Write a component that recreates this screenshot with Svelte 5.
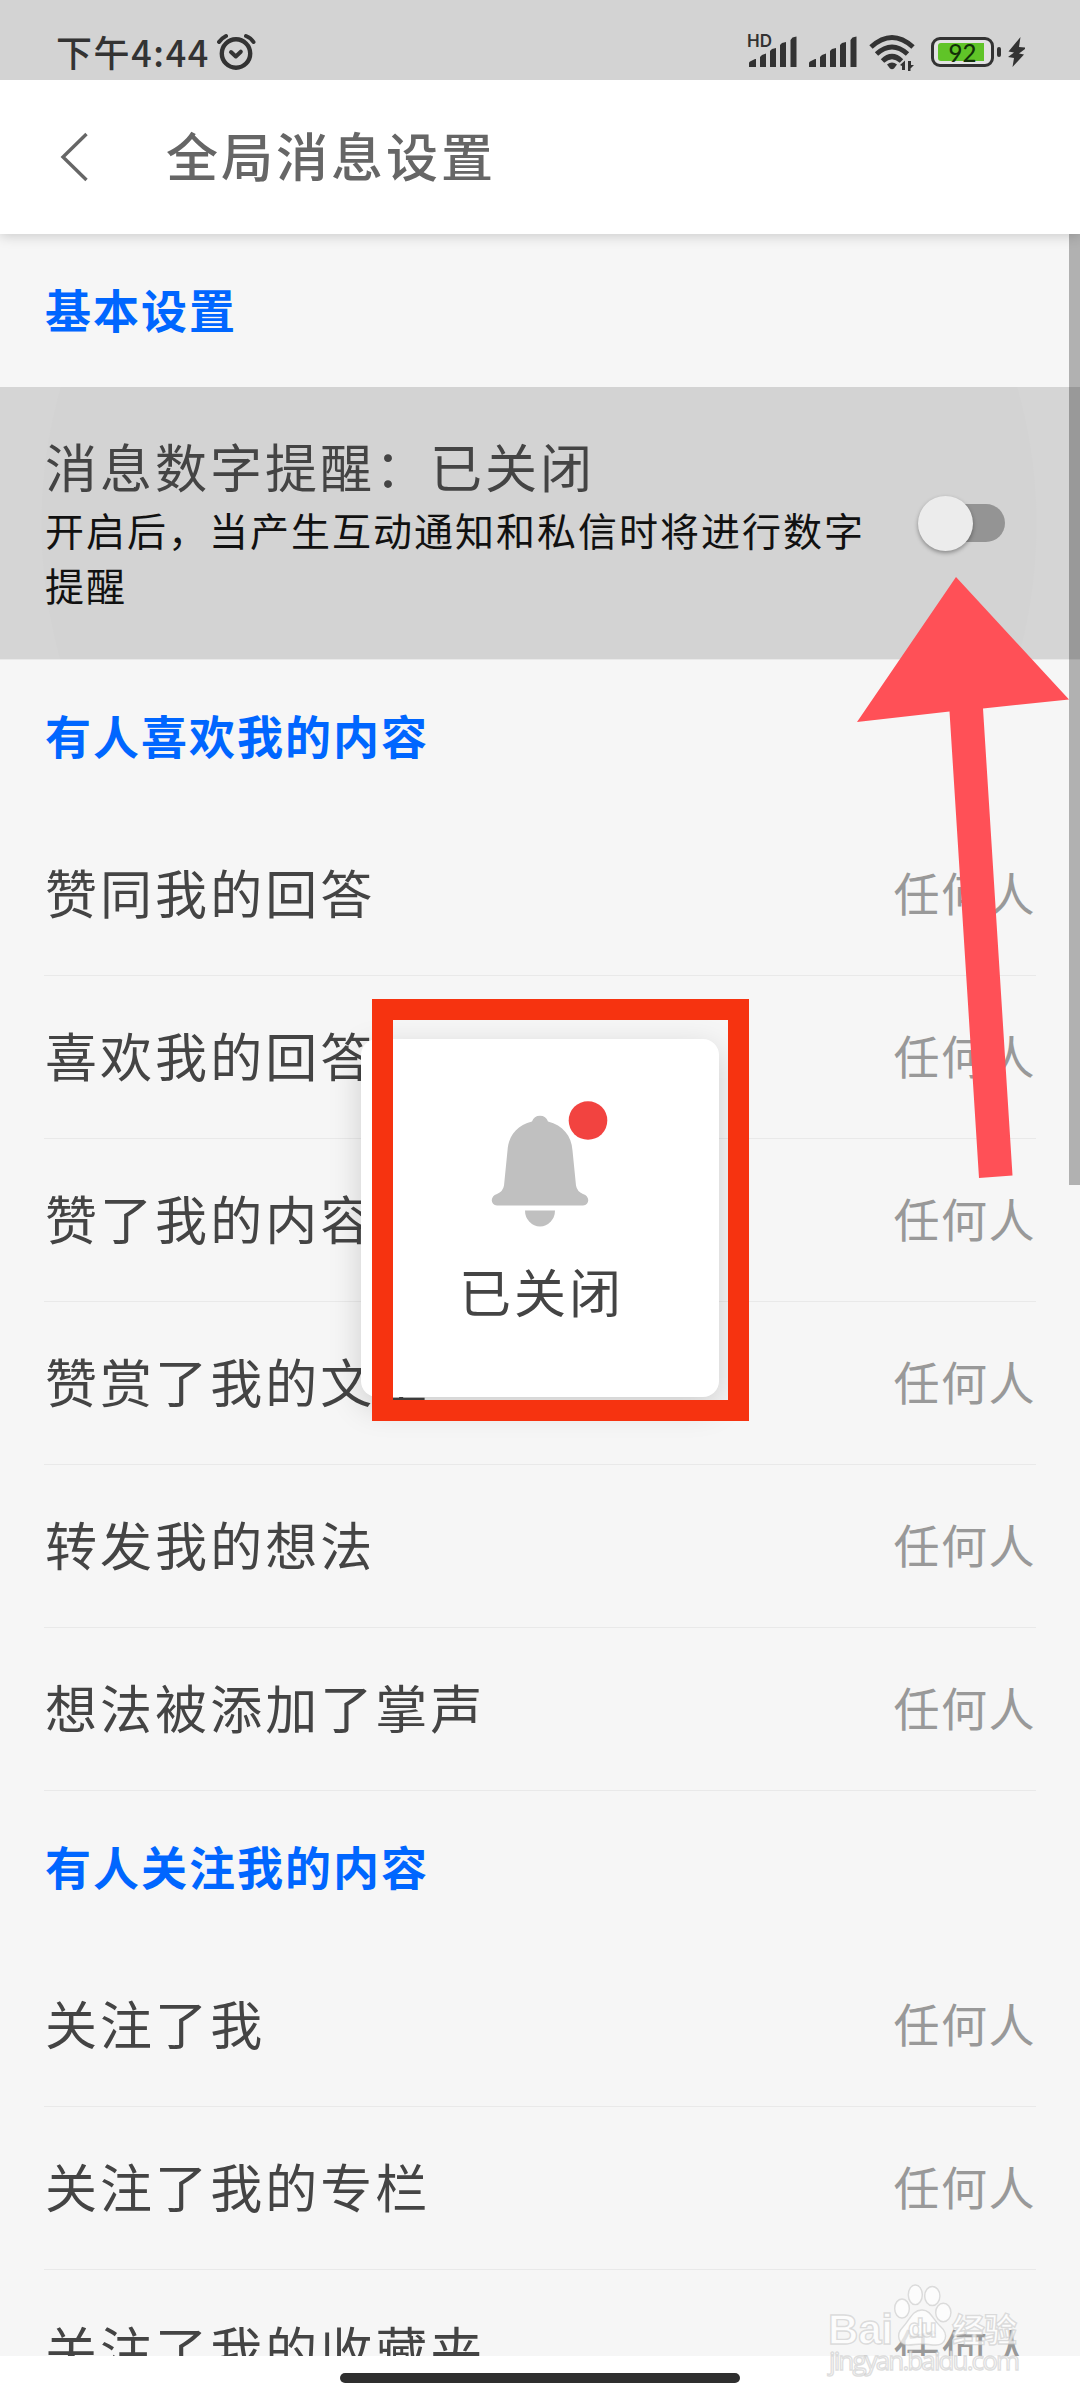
<script lang="ts">
  const likes = [
    "赞同我的回答",
    "喜欢我的回答",
    "赞了我的内容",
    "赞赏了我的文章",
    "转发我的想法",
    "想法被添加了掌声",
  ];
  const follows = ["关注了我", "关注了我的专栏", "关注了我的收藏夹"];

  const groups = [
    { title: "有人喜欢我的内容", items: likes },
    { title: "有人关注我的内容", items: follows },
  ];

  let enabled = $state(false);
  let stateText = $derived(enabled ? "已开启" : "已关闭");
</script>

{#snippet signal()}
  <svg class="signal" width="48" height="32" viewBox="0 0 48 32">
    <path
      d="M0 31v-4q0-1 1-1.500l5-2.500h1v8zM11 31V21l2-2 4-1.500V31zM21 31V15l2-2 4-1V31zM31 31V9l2-2 4-1V31zM41.500 31V4l2-2.500 4-1V31z"
    />
  </svg>
{/snippet}

<div class="screen">
  <div class="status">
    <span class="time">下午4:44</span>
    <svg class="alarm" width="40" height="38" viewBox="0 0 40 38">
      <circle cx="20" cy="20.500" r="14.200" stroke-width="4.400" />
      <path d="M15 19l4.800 4.500 5-4.800" stroke-width="4" />
      <path d="M3 9q3-4 7-6M30 3q5 2 7.500 6" stroke-width="4" />
    </svg>
    <div class="right">
      <span class="hd">HD</span>
      {@render signal()}
      {@render signal()}
      <svg class="wifi" width="47" height="38" viewBox="0 0 47 38">
        <g fill="none" stroke="#333" stroke-width="5">
          <path d="M2 13q21-19 42 0" />
          <path d="M7.500 20q15.500-14 31 0" />
          <path d="M13.500 27q9.500-9 19 0" />
        </g>
        <path d="M18 30.500q5-4 10 0l-3 4q-2 1.500-4 0z" />
        <path d="M31 31l5-4.500V36h-3v-4zM39 27h3v4h3l-3.500 3.500V37H39z" />
      </svg>
      <div class="battery">
        <div class="cell"><div class="level"></div><span>92</span></div>
        <i></i>
      </div>
      <svg width="20" height="32" viewBox="0 0 20 32">
        <path d="M13.500 1L1.500 15.500l5.500 1L1 21l6 1-1.500 9L17 18.500l-5-1 6-4.500v-1.500l-6-.5z" />
      </svg>
    </div>
  </div>

  <header>
    <svg width="30" height="50" viewBox="0 0 30 50">
      <path d="M27.500 2L4 25l23.500 23" fill="none" stroke="#666" stroke-width="3.400" />
    </svg>
    <h1>全局消息设置</h1>
  </header>

  <main>
    <h2>基本设置</h2>
    <div class="setting">
      <div class="desc">
        <div class="name">消息数字提醒：{stateText}</div>
        <p>开启后，当产生互动通知和私信时将进行数字提醒</p>
      </div>
      <button class="toggle" aria-label="消息数字提醒" onclick={() => (enabled = !enabled)}>
        <span class="thumb" class:on={enabled}></span>
      </button>
    </div>

    {#each groups as group}
      <h2>{group.title}</h2>
      {#each group.items as item}
        <div class="row">
          <span>{item}</span>
          <span class="value">任何人</span>
        </div>
      {/each}
    {/each}
  </main>

  <footer><div class="pill"></div></footer>

  <div class="scrollbar"></div>

  <div class="toast">
    <svg width="110" height="116" viewBox="0 0 110 116">
      <path
        fill="#c0c0c0"
        d="M49 11.500a8.500 8.500 0 0 1 16 0c15 4 23.500 14 24.500 29l3.500 35q1 6 7 8.500c7 2 7 11 0 11.500H14c-7-.5-7-9.500 0-11.500q6-2.500 7-8.500l3.500-35c1-15 9.500-25 24.500-29z"
      />
      <path fill="#c0c0c0" d="M42 100.500h30a15 16 0 0 1-30 0z" />
      <circle cx="105" cy="10.500" r="19.300" fill="#f24340" />
    </svg>
    <span>{stateText}</span>
  </div>
  <div class="frame"></div>

  <svg class="arrow" width="214" height="604" viewBox="856 576 214 604">
    <path d="M956 577L1069 699.500l-86 9L1012.500 1175.500l-33.500 2.500L949.500 711.500 857 722z" />
  </svg>

  <svg class="watermark" width="200" height="104" viewBox="824 2280 200 104">
    <g class="mark">
      <text x="828" y="2344" font-size="42" font-weight="700" textLength="65">Bai</text>
      <ellipse cx="902" cy="2308.500" rx="7.300" ry="9.500" />
      <ellipse cx="915.300" cy="2294.800" rx="7" ry="9.800" />
      <ellipse cx="932.300" cy="2296" rx="7.600" ry="9.500" />
      <ellipse cx="943.300" cy="2312.500" rx="7.600" ry="9.200" />
      <path
        d="M922 2310c9 0 11 10 18 16 10 9 5 19-4 19-6 0-9-1-14-1s-9 1-14 1c-9 0-13-10-5-18 7-7 9-17 19-17z"
      />
      <text x="908" y="2337" font-size="26" font-weight="700" textLength="29">du</text>
      <text class="cn" x="952" y="2342" font-size="33" font-weight="700" textLength="65">经验</text>
      <text class="url" x="829" y="2370" font-size="26" textLength="191">jingyan.baidu.com</text>
    </g>
  </svg>
</div>

<style>
  :global(body) {
    margin: 0;
    background: #fff;
  }

  .screen {
    position: relative;
    display: flex;
    flex-direction: column;
    width: 1080px;
    height: 2400px;
    overflow: hidden;
    background: #f6f6f6;
    color: #444;
    font-family: "Noto Sans CJK SC", sans-serif;
  }

  .status {
    display: flex;
    align-items: center;
    box-sizing: border-box;
    flex: none;
    height: 80px;
    padding: 24px 53px 0 56px;
    background: #d3d3d3;
    color: #333;
  }
  .status svg {
    fill: #333;
  }
  .status .alarm {
    margin-left: 6px;
    fill: none;
    stroke: #333;
    stroke-linecap: round;
    stroke-linejoin: round;
  }
  .time {
    margin-top: -3px;
    font-size: 36px;
    line-height: 40px;
    letter-spacing: 1.6px;
    font-weight: 500;
    white-space: nowrap;
  }
  .right {
    display: flex;
    align-items: center;
    margin-left: auto;
  }
  .hd {
    align-self: flex-start;
    width: 24px;
    margin: 1px -22px 0 0;
    font: 600 17px/17px Inter, sans-serif;
  }
  .signal + .signal {
    margin-left: 12px;
  }
  .wifi {
    margin: 2px 15px 0 12px;
  }
  .battery {
    display: flex;
    align-items: center;
    gap: 3px;
    margin-right: 6px;
  }
  .battery i {
    width: 4px;
    height: 10px;
    border-radius: 2px;
    background: #333;
  }
  .cell {
    position: relative;
    box-sizing: border-box;
    width: 63px;
    height: 30px;
    padding: 3px 4px;
    border: 3px solid #333;
    border-radius: 9px;
    background: #e2e2e2;
  }
  .level {
    width: 46px;
    height: 18px;
    border-radius: 3px 0 0 3px;
    background: #60c428;
  }
  .cell span {
    position: absolute;
    inset: 0;
    color: #123008;
    font: 500 24px/25px Lato, sans-serif;
    text-align: center;
  }

  header {
    position: relative;
    z-index: 1;
    display: flex;
    align-items: center;
    flex: none;
    height: 154px;
    padding-left: 59px;
    background: #fff;
    box-shadow: 0 2px 12px rgba(0, 0, 0, 0.18);
    /* keep the shadow off the status bar */
    clip-path: inset(0 0 -20px 0);
  }
  h1 {
    margin: -4px 0 0 77px;
    color: #666;
    font-size: 52px;
    font-weight: 500;
    letter-spacing: 3px;
    line-height: 76px;
  }

  main {
    flex: 1;
    min-height: 0;
    overflow: hidden;
  }
  h2 {
    height: 153px;
    margin: 0;
    padding-left: 45px;
    color: #0066ff;
    font-size: 46px;
    font-weight: 700;
    letter-spacing: 2px;
    line-height: 148px;
  }

  .setting {
    display: flex;
    box-sizing: border-box;
    height: 273px;
    padding: 42px 75px 0 45px;
    border-bottom: 1px solid #e9e9e9;
    background: radial-gradient(circle 498px at 539px 137px, #d3d3d3 99.8%, #d5d5d5 100%);
  }
  .desc {
    width: 830px;
  }
  .name {
    font-size: 52px;
    letter-spacing: 3px;
    line-height: 74px;
    white-space: nowrap;
  }
  .setting p {
    margin: -1px 0 0;
    color: #111;
    font-size: 39px;
    letter-spacing: 2px;
    line-height: 55px;
  }
  .toggle {
    position: relative;
    width: 84px;
    height: 38px;
    margin: 75px 0 0 auto;
    padding: 0;
    border: 0;
    border-radius: 19px;
    background: #949494;
  }
  .thumb {
    position: absolute;
    top: -8.5px;
    left: -3px;
    width: 55px;
    height: 55px;
    border-radius: 50%;
    background: #ececec;
    box-shadow: 0 2px 4px rgba(0, 0, 0, 0.35);
  }
  .thumb.on {
    left: 32px;
  }

  .row {
    display: flex;
    justify-content: space-between;
    box-sizing: border-box;
    height: 163px;
    margin: 0 44px;
    padding-left: 1px;
    border-bottom: 1px solid #e9e9e9;
    font-size: 52px;
    letter-spacing: 3.05px;
    line-height: 157px;
    white-space: nowrap;
  }
  .value {
    color: #999;
    font-size: 46px;
    letter-spacing: 1.5px;
    line-height: 156px;
  }

  footer {
    display: flex;
    justify-content: center;
    flex: none;
    height: 44px;
    background: #fff;
  }
  .pill {
    width: 400px;
    height: 10px;
    margin-top: 17px;
    border-radius: 5px;
    background: #2f2f2f;
  }

  .scrollbar {
    position: absolute;
    top: 234px;
    right: 0;
    width: 11px;
    height: 951px;
    background: rgba(0, 0, 0, 0.28);
  }

  .toast {
    position: absolute;
    top: 1039px;
    left: 361px;
    display: flex;
    flex-direction: column;
    align-items: center;
    box-sizing: border-box;
    width: 358px;
    height: 358px;
    padding-top: 71px;
    border-radius: 16px;
    background: #fff;
    box-shadow: 0 10px 32px rgba(0, 0, 0, 0.17);
  }
  .toast svg {
    margin-left: -4px;
    overflow: visible;
  }
  .toast span {
    margin: 27px 0 0 3px;
    font-size: 52px;
    letter-spacing: 3px;
    line-height: 76px;
  }

  .frame {
    position: absolute;
    top: 999px;
    left: 372px;
    box-sizing: border-box;
    width: 377px;
    height: 422px;
    border: 21.5px solid #f63310;
  }

  .arrow {
    position: absolute;
    top: 576px;
    left: 856px;
    fill: #ff5057;
  }

  .watermark {
    position: absolute;
    top: 2280px;
    left: 824px;
  }
  .mark {
    fill: rgba(255, 255, 255, 0.7);
    stroke: rgba(190, 190, 190, 0.5);
    stroke-width: 1.4px;
    font-family: "Liberation Sans", sans-serif;
  }
  .mark .cn {
    font-family: "Noto Sans CJK SC", sans-serif;
  }
  .mark .url {
    font-family: "Open Sans", sans-serif;
  }
</style>
